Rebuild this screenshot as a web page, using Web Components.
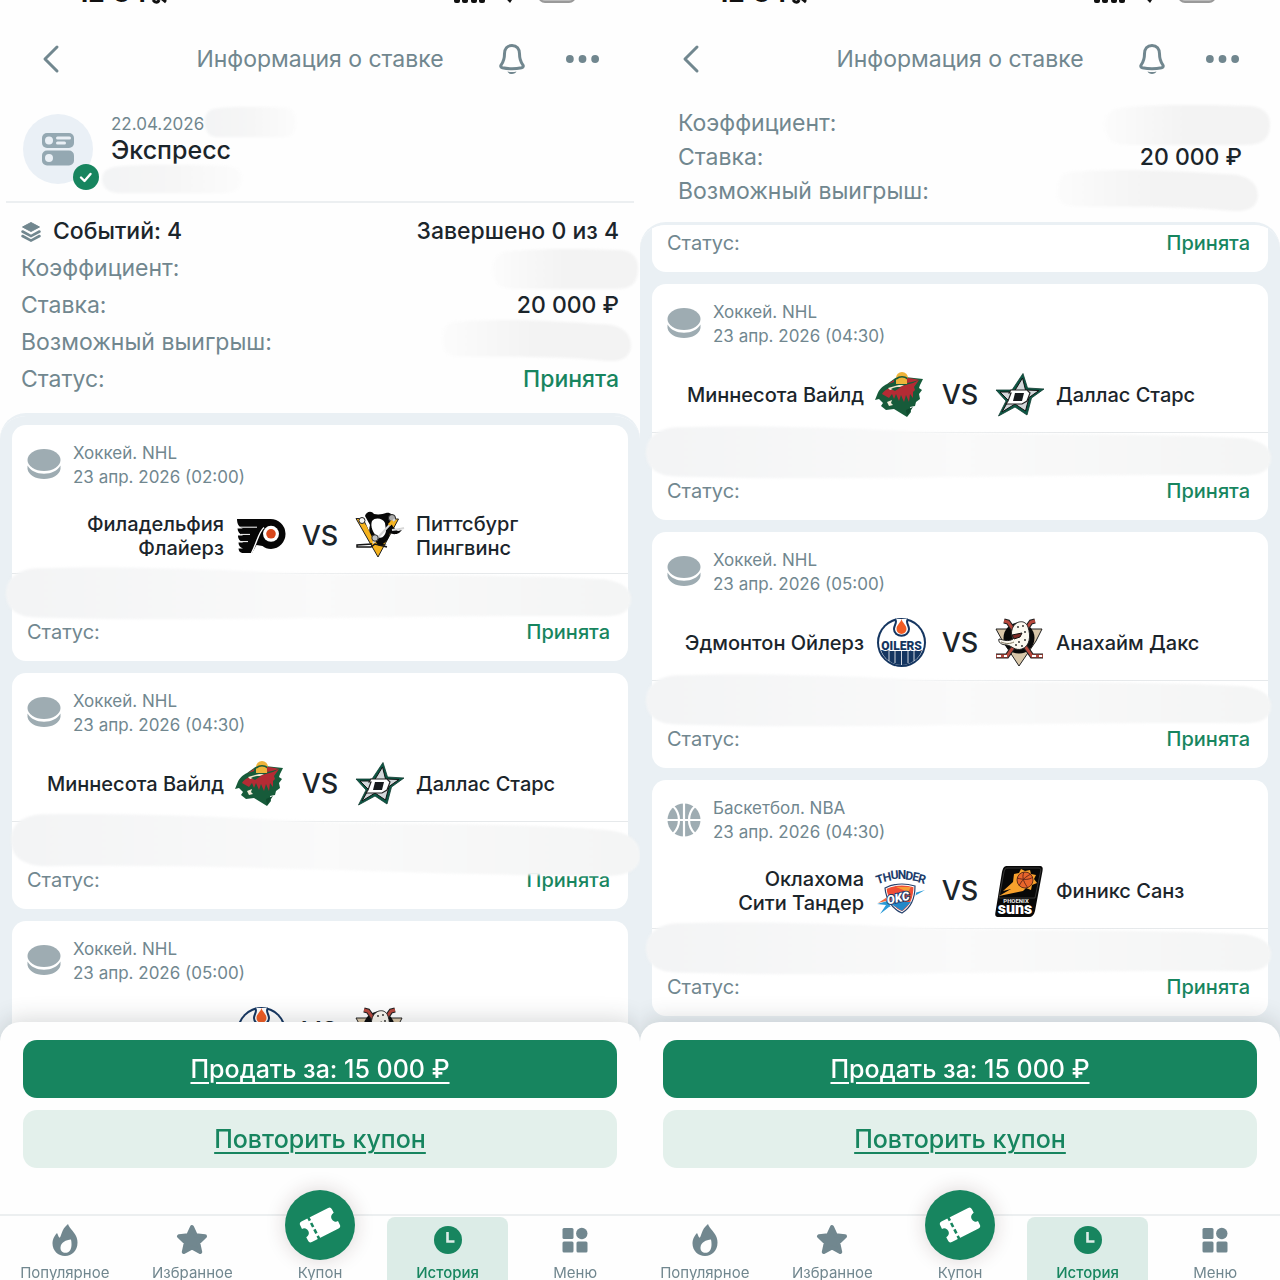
<!DOCTYPE html>
<html lang="ru">
<head>
<meta charset="utf-8">
<title>Информация о ставке</title>
<style>
  body {
    margin: 0;
    font-family: Inter, "Noto Sans", sans-serif;
    color: #1b252b;
    background: #fefefe;
    --green: #17855f;
    --green-soft: #e3f0eb;
    --gray: #71878f;
    --list: #eaf0f4;
  }
  main {
    display: grid;
    grid-template-columns: 1fr 1fr;
    height: 100vh;
    overflow: hidden;
  }
</style>
</head>
<body>
<main>
  <bet-screen view="full"></bet-screen>
  <bet-screen view="scrolled" scroll="198"></bet-screen>
</main>

<script>
const MATCHES = [
  {
    sport: 'hockey', league: 'Хоккей. NHL', date: '23 апр. 2026 (02:00)',
    home: 'Филадельфия Флайерз', homeLogo: 'flyers', away: 'Питтсбург Пингвинс', awayLogo: 'penguins',
  },
  {
    sport: 'hockey', league: 'Хоккей. NHL', date: '23 апр. 2026 (04:30)',
    home: 'Миннесота Вайлд', homeLogo: 'wild', away: 'Даллас Старс', awayLogo: 'stars',
  },
  {
    sport: 'hockey', league: 'Хоккей. NHL', date: '23 апр. 2026 (05:00)',
    home: 'Эдмонтон Ойлерз', homeLogo: 'oilers', away: 'Анахайм Дакс', awayLogo: 'ducks',
  },
  {
    sport: 'basketball', league: 'Баскетбол. NBA', date: '23 апр. 2026 (04:30)',
    home: 'Оклахома Сити Тандер', homeLogo: 'thunder', away: 'Финикс Санз', awayLogo: 'suns',
  },
];

const ICONS = {
  back: ['0 0 20 30', '<path d="M16 3 4 15l12 12" fill="none" stroke="currentColor" stroke-width="3" stroke-linecap="round" stroke-linejoin="round"/>'],
  bell: ['0 0 28 32', '<path d="M14 2.500c-4.800 0-7.500 3.500-7.500 8.300 0 5.500-1.200 8.200-3.300 11-1 1.500-.4 2.500 1.200 2.900 6.200 1.300 13 1.300 19.200 0 1.600-.4 2.200-1.400 1.200-2.900-2.100-2.800-3.300-5.500-3.300-11 0-4.800-2.700-8.300-7.500-8.300z" fill="none" stroke="currentColor" stroke-width="3" stroke-linejoin="round"/><path d="M9.500 28.500c3 .8 6 .8 9 0-1.200 3.300-7.800 3.300-9 0z" fill="currentColor"/>'],
  dots: ['0 0 34 8', '<g fill="currentColor"><circle cx="4" cy="4" r="4"/><circle cx="17" cy="4" r="4"/><circle cx="30" cy="4" r="4"/></g>'],
  express: ['0 0 34 34', '<rect x="1" y="1" width="32" height="15" rx="5" fill="#94a8b2"/><rect x="1" y="18.500" width="32" height="15" rx="5" fill="#94a8b2"/><g fill="#eaf0f6"><circle cx="8" cy="8.500" r="4"/><circle cx="8" cy="26" r="4"/><rect x="15" y="4.500" width="15" height="3" rx="1.500"/><rect x="15" y="9.500" width="10" height="3" rx="1.500"/></g>'],
  check: ['0 0 28 28', '<circle cx="14" cy="14" r="13" fill="#17855f"/><path d="m9 14.500 3.500 3.500 6-7" fill="none" stroke="#fff" stroke-width="2.400" stroke-linecap="round" stroke-linejoin="round"/>'],
  layers: ['0 0 20 20', '<path d="M10 0.500 18.500 5 10 9.500 1.500 5z" fill="currentColor" stroke="currentColor" stroke-linejoin="round"/><path d="m1.500 9.500 8.500 4.600 8.500-4.600M1.500 14l8.500 4.600 8.500-4.600" fill="none" stroke="currentColor" stroke-width="2.600" stroke-linecap="round"/>'],
  hockey: ['0 0 34 34', '<ellipse cx="17" cy="12" rx="16.500" ry="11" fill="#9eacb2"/><path d="M.5 17.500c3 5.200 9 8.200 16.500 8.200s13.500-3 16.500-8.200V21c-1 6-8 10-16.500 10S1.500 27 .5 21z" fill="#9eacb2"/>'],
  basketball: ['0 0 34 34', '<circle cx="17" cy="17" r="16.500" fill="#9eacb2"/><path d="M17 0v34M0 17h34M6 3c8 8 8 20 0 28M28 3c-8 8-8 20 0 28" fill="none" stroke="#fff" stroke-width="2.200"/>'],
  flame: ['0 0 26 32', '<path d="M16 0c1.500 5.500 9.500 9 9.500 18.500C25.500 26.500 20 32 13 32S.5 26.500 .5 19.500c0-4.500 2-7.500 4.500-10.500 1 1.500 1.200 3.500 2.500 4.700C9.500 13 9 5.500 16 0zM19 15.500c-5 .5-10 2.500-10.500 8-.2 3 2 5.300 4.800 5.300 5.500 0 7.200-6.300 5.700-13.300z" fill="currentColor" fill-rule="evenodd"/>'],
  star: ['0 0 32 32', '<path d="m16 3 3.800 8.300 9.200 1-6.800 6.400 2 9.300L16 23.400 7.800 28l2-9.300L3 12.300l9.200-1z" fill="currentColor" stroke="currentColor" stroke-width="4" stroke-linejoin="round"/>'],
  ticket: ['0 0 44 44', '<g transform="rotate(-27 22 22)"><path d="M7 10.500h30a2.800 2.800 0 0 1 2.800 2.800v4a4.700 4.700 0 0 0 0 9.400v4a2.800 2.800 0 0 1-2.800 2.800H7a2.800 2.800 0 0 1-2.800-2.800v-4a4.700 4.700 0 0 0 0-9.400v-4A2.800 2.800 0 0 1 7 10.500z" fill="#fff"/><path d="M15 9v26" stroke="#17855f" stroke-width="2.600" stroke-dasharray="4.500 2.700"/></g>'],
  clock: ['0 0 32 32', '<circle cx="16" cy="16" r="14" fill="currentColor"/><path d="M15.500 8v9.500h7" fill="none" stroke="#dcece7" stroke-width="2.600"/>'],
  grid: ['0 0 32 32', '<g fill="currentColor"><rect x="3.500" y="4" width="11" height="11" rx="1.500"/><circle cx="22.800" cy="9.500" r="5.700"/><rect x="3.500" y="17.500" width="11" height="11" rx="1.500"/><rect x="17.500" y="17.500" width="11" height="11" rx="1.500"/></g>'],
  signal: ['0 0 126 24', '<g fill="#111"><rect x="4" y="14" width="6" height="9" rx="2"/><rect x="12" y="10" width="6" height="13" rx="2"/><rect x="21" y="6" width="6" height="17" rx="2"/><rect x="29" y="2" width="6" height="21" rx="2"/><path d="M46 8c7-7 17-7 24 0L60 23z"/></g><rect x="89" y="-2" width="36" height="24" rx="6" fill="#bbb" stroke="#999" stroke-width="2"/>'],
  moon: ['0 0 16 24', '<path d="M2 5h10v12H2z" fill="#111"/><path d="M1 20c2 3 5 3 6 0M9 18l5 4" stroke="#111" stroke-width="3" fill="none"/>'],
};

const LOGOS = {
  flyers: `
    <path d="M1 8h33a15 15 0 0 1 1 30c-3.500 0-6.200-.9-8.500-3L20.500 34 16 42H8c-4 0-5-1.500-5.500-4.500h4.500c-3-1-4.500-3-4.500-6h5C3.500 30 2 28 2 24.500h5C3.500 23 1.800 21 1.500 17.500H7C3 16.500 1 13 1 8z" fill="#060606"/>
    <g stroke="#fff" fill="none"><path d="M4 16.200h17M5 23.400h9M5 30.600h7" stroke-width="1"/><path d="M28 16.500C22.500 21 21 32 15.500 42" stroke-width="1.400"/></g>
    <circle cx="35" cy="22.800" r="8" fill="#fff"/><circle cx="35" cy="22.800" r="4.800" fill="#d8471b"/>`,
  penguins: `
    <path d="M2 7.500h7l9 20L37 8h7.500L24 46z" fill="#f5b21d" stroke="#222" stroke-width="1" stroke-linejoin="round"/>
    <path d="M11 5c1-4 6-6 9-2 5 1 9 0 12-1 4-1 7 2 8 5l-5 2c3 5 5 9 9 11l4-1-3 3c-4 2-7 1-9 0-1 6-4 9-7 11l4 1-8 1-4-5c-5-4-7-9-5-16z" fill="#080808"/>
    <path d="M18 10c3-4 11-3 13 2l1 8c-1 5-4 8-8 6-5-3-8-11-6-16z" fill="#fff"/>
    <path d="m8 12 4 2 11 22 1 8L8 12z" fill="#f5b21d"/>
    <circle cx="8" cy="9.500" r="3" fill="#f5f5f5" stroke="#222"/><circle cx="38" cy="7" r="3.500" fill="#aaa" stroke="#222"/>
    <path d="M41 8 19 32M38 19l8-1 4-1" stroke="#d8d8d8" stroke-width="2"/><path d="m18 33-15 1v2h14l4-3 12 3" fill="none" stroke="#151515" stroke-width="1.500"/>
    <circle cx="21" cy="27" r="3.200" fill="#bfc2c5" stroke="#333"/><path d="m35 14 4-4" stroke="#f5b21d" stroke-width="3"/>`,
  wild: `
    <path d="M1 25c2-6 6-9 10-11l7-5c3-3 7-3 11-2l18 2-3 6-1 3 3 2-3 4 1 5-4 3-1 4-5 1 1 5-4 5-13-8-8 1-5-4 2-3-4-4-4 1z" fill="#175b3a"/>
    <path d="M20 8a6 6 0 0 1 12 0l-1 6H20z" fill="#eeb33a"/><path d="M20 9c4-3 8-3 12 0" stroke="#175b3a" stroke-width="1.600" fill="none"/>
    <path d="M6 24c3-6 12-8 20-8l11-3 6-3-5 7 1 3-2 2v6l-3-4-1 8-3-7-2 7-3-7-2 6-3-7-2 5-2-5-3 4z" fill="#b42b34"/>
    <path d="M31 8c5 0 8 1 12 2l-7 2-5 1zM18 10l-6 4 6-2z" fill="#b42b34"/><path d="m12 18 11-3h5l-6 3-8 2z" fill="#f2e7ce"/><path d="M15 19c4-2 6-2 10-2l-6 4z" fill="#175b3a"/>
    <path d="m11 32 5-2-1 3 2 2-4 1" fill="#f4edda"/><path d="m31 46-1-6 7-3z" fill="#0f4a2e"/>`,
  stars: `
    <path d="m29 3.500 4.500 14.500L50 19 37.500 28 33 45 21 37 4.500 46 12 31 2 20h16z" fill="#0b5945" stroke="#103a30" stroke-width=".8"/>
    <path d="m28.500 8 3 12L45 20.500 35 27.500 31.500 41 21 34 8 42l6.500-11.500L6 22h14z" fill="#d3d7da" stroke="#111"/>
    <path d="M17 20h16l3 3-3 8-5 3H12l2-3 3-8h-2z" fill="#fff" stroke="#222" stroke-width="1.200"/><path d="M21 23h9l-2 8h-9z" fill="#171a1d"/>`,
  oilers: `
    <circle cx="25.500" cy="24.500" r="24.500" fill="#143560"/><circle cx="25.500" cy="24.500" r="22.500" fill="#fff"/>
    <path d="M5 32h41A21.500 21.500 0 0 1 5 32z" fill="#143560"/><path d="M13 31v12M19 31v14M25.500 31v16M32 31v14M38 31v12" stroke="#fff" stroke-width=".8"/>
    <path d="M19 1c3 3-1 6-1 10 0 9 15 9 15 0 0-4-4-7-1-10" fill="#fff" stroke="#143560" stroke-width="2"/>
    <path d="M25.500 1c1 4 5 6 5 10a5 5 0 0 1-10 0c0-4 4-6 5-10z" fill="#f15b22"/>
    <text x="25.500" y="32" text-anchor="middle" font-family="Roboto" font-size="12" font-weight="900" fill="#143560" stroke="#fff" stroke-width="2" paint-order="stroke">OILERS</text>`,
  ducks: `
    <path d="M2 11h46l-6 12-17 25L8 22z" fill="#d8c6a8" stroke="#222"/>
    <circle cx="25" cy="20" r="15.500" fill="#090909"/>
    <g fill="none"><path d="m10 3 4 1 24 34h11M41 3l-4 1-24 34H2" stroke="#222" stroke-width="5"/><path d="m10 3 4 1 24 34h11M41 3l-4 1-24 34H2" stroke="#b8483d" stroke-width="3"/><path d="M38 38h10M3 38h10" stroke="#fff" stroke-width="2" stroke-dasharray="4 3"/></g>
    <path d="M19 9c3-6 12-8 15 0 3 9 2 19-6 22-7 2-10-3-15-4-6 0-9-3-8-6 5 1 9 3 14 0-2-4-2-8 0-12z" fill="#fbf8f0" stroke="#222"/>
    <path d="m18 17 10-2-2 4-6 2z" fill="#7d2a26" stroke="#111"/><g fill="#222"><circle cx="24" cy="9" r=".9"/><circle cx="29" cy="8" r=".9"/><circle cx="31" cy="14" r=".9"/><circle cx="25" cy="24" r=".9"/><circle cx="31" cy="22" r=".9"/><circle cx="22" cy="27" r=".9"/><circle cx="28" cy="28" r=".9"/></g>
    <path d="M7 24c5 2 9 2 13 0" stroke="#7f765f" fill="none"/>`,
  thunder: `
    <path d="m1 38 48-14-14 8-22 9-9 7 6-9zM32 26l17-1" fill="#2b9bd7"/><path d="m2 37 14-9 24-4-26 10z" fill="#ef6a3b"/>
    <path d="M9 22c10-5 20-5 30-2 0 11-3 21-13 27C16 43 10 33 9 22z" fill="#ef4e36" stroke="#fff" stroke-width="3"/><path d="M9 22c10-5 20-5 30-2 0 11-3 21-13 27C16 43 10 33 9 22z" fill="none" stroke="#27416c" stroke-width="1.200"/>
    <path d="M12 36h23l-9 9z" fill="#2388c8"/><path d="M20 21h15l-3 5z" fill="#f59b35"/>
    <text x="23" y="36" transform="rotate(-13 23 36)" text-anchor="middle" font-family="Roboto" font-size="12" font-weight="900" font-style="italic" fill="#fff" stroke="#203b6a" stroke-width="2" paint-order="stroke">OKC</text>
    <g fill="#203b6a" font-family="Roboto" font-size="12" font-weight="700" text-anchor="middle"><text x="5" y="17" transform="rotate(-18 5 17)">T</text><text x="12" y="15" transform="rotate(-12 12 15)">H</text><text x="19" y="13" transform="rotate(-5 19 13)">U</text><text x="26" y="13">N</text><text x="33" y="14" transform="rotate(6 33 14)">D</text><text x="39" y="15" transform="rotate(11 39 15)">E</text><text x="45" y="17" transform="rotate(15 45 17)">R</text></g>`,
  suns: `
    <path d="M13 0h32c4 0 4 2 3.500 5L41 45c-1 4-3 6-6 6H5c-4 0-4-2-3.500-5L8 6c1-4 2-6 5-6z" fill="#080808"/>
    <path d="M14 2h30c3 0 3 1 2.500 4L41 32H5L10 6c.5-3 1.500-4 4-4z" fill="none" stroke="#555" stroke-width=".6"/>
    <path d="m20 8 5-1 2-4 4 2 5-1 1 4 5 1-2 4 3 4-5 2-1 5-5-2-3 3L5 30l12-7-8 2 10-9z" fill="#f8a12c"/>
    <circle cx="31" cy="14" r="8" fill="#e9652b" stroke="#431d12" stroke-width=".8"/><path d="M23 12c7 2 12 2 16-1M30 6c-3 6 1 12 4 16M25 20c3-6 6-9 12-12" fill="none" stroke="#5b2417" stroke-width=".9"/>
    <text x="22" y="37" text-anchor="middle" font-family="Roboto" font-size="6" font-weight="900" fill="#ddd">PHOENIX</text>
    <text x="21" y="48" text-anchor="middle" font-family="Roboto" font-size="16" font-weight="900" fill="#fff">suns</text>`,
};

// shapes of the smears that hide private values
const SMEARS = {
  pill: ['0 0 140 40', 'M18 3C50 0 90 1 122 2c14 1 18 10 17 20-1 13-8 17-20 17H20C6 39 1 30 1 20 1 10 7 4 18 3z'],
  wave: ['0 0 190 42', 'M12 4C50 0 105 2 160 6c20 0 28 10 28 20 0 12-10 16-24 15-50-5-95-4-145-4C4 37 0 30 1 20 2 10 5 5 12 4z'],
  wide: ['0 0 630 58', 'M30 3C130 1 210 4 300 8c110 2 210 1 300 5 25 3 30 12 29 20-1 12-12 15-28 15-200-2-370 6-570 1C12 49 1 41 1 27 1 14 10 5 30 3z'],
  low: ['0 0 630 64', 'M30 3c100-1 180 2 270 7 110 3 210 1 298 8 25 3 32 13 31 26-1 12-14 17-32 17-180 0-370-12-560-9C12 52 1 42 1 27 1 14 10 5 30 3z'],
};

class UiIcon extends HTMLElement {
  connectedCallback() {
    const [box, shapes] = ICONS[this.getAttribute('name')];
    this.attachShadow({ mode: 'open' }).innerHTML = `
      <style>
        :host { display: block; flex: none; }
        svg { display: block; width: 100%; height: 100%; overflow: visible; }
      </style>
      <svg viewBox="${box}" aria-hidden="true">${shapes}</svg>`;
  }
}

class TeamLogo extends HTMLElement {
  connectedCallback() {
    this.attachShadow({ mode: 'open' }).innerHTML = `
      <style>
        :host { display: block; width: 50px; height: 50px; }
        svg { display: block; overflow: visible; }
      </style>
      <svg viewBox="0 0 50 50" width="50" height="50">${LOGOS[this.getAttribute('team')]}</svg>`;
  }
}

class SmearMark extends HTMLElement {
  connectedCallback() {
    const [box, shape] = SMEARS[this.getAttribute('shape')];
    this.attachShadow({ mode: 'open' }).innerHTML = `
      <style>
        :host { display: block; pointer-events: none; }
        svg { display: block; width: 100%; height: 100%; filter: blur(1px); }
      </style>
      <svg viewBox="${box}" preserveAspectRatio="none" aria-hidden="true">
        <linearGradient id="fade"><stop stop-color="var(--from, #f3f4f5)"/><stop offset=".5" stop-color="var(--mid, #fafafa)"/><stop offset="1" stop-color="var(--to, #f4f5f5)"/></linearGradient>
        <path d="${shape}" fill="url(#fade)"/>
      </svg>`;
  }
}

class AppHeader extends HTMLElement {
  connectedCallback() {
    this.attachShadow({ mode: 'open' }).innerHTML = `
      <style>
        :host { display: block; color: var(--gray); }
        .status {
          display: flex;
          align-items: flex-end;
          height: 4px;
          padding: 0 64px 0 77px;
          overflow: hidden;
          color: #111;
          font-size: 26px;
          font-weight: 700;
          line-height: 22px;
        }
        .status .moon { width: 16px; height: 24px; margin-left: 4px; }
        .status .signal { width: 126px; height: 24px; margin-left: auto; }
        .bar {
          display: grid;
          grid-template-columns: 1fr auto 1fr;
          align-items: center;
          height: 94px;
          padding: 16px 41px 0;
          box-sizing: border-box;
        }
        h1 { margin: 0; font-size: 23px; font-weight: 400; }
        button { border: 0; padding: 0; background: none; color: inherit; }
        .back { justify-self: start; }
        .back ui-icon { width: 20px; height: 30px; }
        .actions { display: flex; justify-content: flex-end; align-items: center; gap: 40px; }
        .bell { width: 28px; height: 32px; }
        .dots { width: 33px; height: 8px; }
      </style>
      <div class="status"><span>12:34</span><ui-icon class="moon" name="moon"></ui-icon><ui-icon class="signal" name="signal"></ui-icon></div>
      <div class="bar">
        <button class="back" aria-label="Назад"><ui-icon name="back"></ui-icon></button>
        <h1><slot></slot></h1>
        <div class="actions">
          <button aria-label="Уведомления"><ui-icon class="bell" name="bell"></ui-icon></button>
          <button aria-label="Ещё"><ui-icon class="dots" name="dots"></ui-icon></button>
        </div>
      </div>`;
  }
}

class BetTitle extends HTMLElement {
  connectedCallback() {
    this.attachShadow({ mode: 'open' }).innerHTML = `
      <style>
        :host {
          display: flex;
          gap: 18px;
          margin: 0 6px;
          padding: 16px 17px 17px;
          border-bottom: 2px solid #eceff1;
        }
        .avatar {
          position: relative;
          display: grid;
          place-items: center;
          width: 70px;
          height: 70px;
          border-radius: 50%;
          background: #eaf0f6;
        }
        .avatar .kind { width: 34px; height: 34px; }
        .avatar .mark { position: absolute; right: -7px; bottom: -7px; width: 28px; height: 28px; }
        .text { position: relative; flex: 1; }
        .date { font-size: 17px; line-height: 20px; color: var(--gray); }
        h2 { margin: 0; font-size: 25px; font-weight: 500; line-height: 32px; }
        smear-mark { position: absolute; --mid: #f6f6f6; --to: #fcfcfc; }
        .time { left: 93px; top: -8px; width: 93px; height: 32px; }
        .number { left: -10px; top: 50px; width: 142px; height: 30px; }
      </style>
      <div class="avatar"><ui-icon class="kind" name="express"></ui-icon><ui-icon class="mark" name="check"></ui-icon></div>
      <div class="text">
        <div class="date">22.04.2026</div>
        <h2>Экспресс</h2>
        <smear-mark class="time" shape="pill"></smear-mark>
        <smear-mark class="number" shape="pill"></smear-mark>
      </div>`;
  }
}

class BetSummary extends HTMLElement {
  connectedCallback() {
    const full = this.hasAttribute('full');
    this.attachShadow({ mode: 'open' }).innerHTML = `
      <style>
        :host { display: block; padding: 8px 38px 14px; font-size: 23px; line-height: 34px; }
        :host([full]) { padding: 10px 21px 15px; line-height: 37px; }
        dl { margin: 0; }
        .row { position: relative; display: flex; justify-content: space-between; }
        dt { color: var(--gray); }
        dd { margin: 0; font-weight: 500; }
        .events dt { display: flex; align-items: center; gap: 12px; color: inherit; font-weight: 500; }
        .events ui-icon { width: 20px; height: 20px; color: var(--gray); }
        .ok { color: var(--green); }
        smear-mark { position: absolute; --from: #fcfcfc; --mid: #f3f3f3; --to: #f3f3f3; }
        .odds { right: -20px; top: -2px; width: 148px; height: 42px; }
        .win { right: -14px; top: -6px; width: 192px; height: 44px; }
        :host(:not([full])) .odds { right: -29px; width: 168px; }
        :host(:not([full])) .win { right: -18px; width: 204px; }
      </style>
      <dl>
        ${full ? '<div class="row events"><dt><ui-icon name="layers"></ui-icon>Событий: 4</dt><dd>Завершено 0 из 4</dd></div>' : ''}
        <div class="row"><dt>Коэффициент:</dt><dd><smear-mark class="odds" shape="pill"></smear-mark></dd></div>
        <div class="row"><dt>Ставка:</dt><dd>20 000 ₽</dd></div>
        <div class="row"><dt>Возможный выигрыш:</dt><dd><smear-mark class="win" shape="wave"></smear-mark></dd></div>
        ${full ? '<div class="row"><dt>Статус:</dt><dd class="ok">Принята</dd></div>' : ''}
      </dl>`;
  }
}

class MatchCard extends HTMLElement {
  connectedCallback() {
    const match = this.match;
    const smear = this.getAttribute('smear');
    this.attachShadow({ mode: 'open' }).innerHTML = `
      <style>
        :host {
          position: relative;
          display: block;
          padding: 16px 18px 17px 15px;
          border-radius: 14px;
          background: #fff;
        }
        header { display: flex; gap: 12px; align-items: center; color: var(--gray); font-size: 17px; line-height: 24px; }
        header ui-icon { width: 34px; height: 34px; }
        .teams {
          display: grid;
          grid-template-columns: 1fr 50px 68px 50px 1fr;
          align-items: center;
          height: 50px;
          margin: 22px -3px 12px 0;
          font-size: 20px;
          font-weight: 500;
          line-height: 24px;
          text-wrap: balance;
        }
        .home { justify-self: end; text-align: right; max-width: 186px; margin-right: 12px; }
        .away { max-width: 160px; margin-left: 12px; }
        .vs { text-align: center; font-size: 27px; }
        .line { height: 1px; margin: 0 -18px 46px -15px; background: #e6e9eb; }
        footer { display: flex; justify-content: space-between; font-size: 20px; line-height: 24px; color: var(--gray); }
        footer b { color: var(--green); font-weight: 500; }
        smear-mark { position: absolute; left: -7px; right: -4px; top: 140px; height: 62px; }
        smear-mark[shape=low] { left: -2px; right: -13px; top: 138px; height: 68px; }
      </style>
      <header>
        <ui-icon name="${match.sport}"></ui-icon>
        <div><div>${match.league}</div><div>${match.date}</div></div>
      </header>
      <div class="teams">
        <div class="home">${match.home}</div>
        <team-logo team="${match.homeLogo}"></team-logo>
        <div class="vs">VS</div>
        <team-logo team="${match.awayLogo}"></team-logo>
        <div class="away">${match.away}</div>
      </div>
      <div class="line"></div>
      <footer><span>Статус:</span><b>Принята</b></footer>
      ${smear ? `<smear-mark shape="${smear}"></smear-mark>` : ''}`;
  }
}

class MatchList extends HTMLElement {
  connectedCallback() {
    this.attachShadow({ mode: 'open' }).innerHTML = `
      <style>
        :host {
          display: block;
          border-top: 3px solid var(--list);
          border-radius: 26px 26px 0 0;
          background: var(--list);
          overflow: hidden auto;
          scrollbar-width: none;
        }
        .cards { display: flex; flex-direction: column; gap: 12px; padding: 9px 12px 32px; }
      </style>
      <div class="cards"></div>`;
    const cards = this.shadowRoot.querySelector('.cards');
    const smears = Number(this.getAttribute('scroll')) ? ['', 'wide', 'wide', 'wide'] : ['wide', 'low', 'wide', 'wide'];
    MATCHES.forEach((match, i) => {
      const card = document.createElement('match-card');
      card.match = match;
      card.setAttribute('smear', smears[i]);
      cards.appendChild(card);
    });
  }
}

class CouponActions extends HTMLElement {
  connectedCallback() {
    this.attachShadow({ mode: 'open' }).innerHTML = `
      <style>
        :host {
          display: grid;
          gap: 12px;
          padding: 18px 23px 46px;
          border-radius: 20px 20px 0 0;
          background: #fefefe;
          box-shadow: 0 -2px 24px rgba(40, 50, 55, .2);
        }
        button {
          height: 58px;
          border: 0;
          border-radius: 14px;
          font: 500 25px Inter, "Noto Sans", sans-serif;
          text-decoration: underline;
          text-decoration-thickness: 2px;
          text-underline-offset: 4px;
          color: #fff;
          background: var(--green);
        }
        .repeat { color: var(--green); background: var(--green-soft); }
      </style>
      <button>Продать за: 15 000 ₽</button>
      <button class="repeat">Повторить купон</button>`;
  }
}

class TabBar extends HTMLElement {
  connectedCallback() {
    this.attachShadow({ mode: 'open' }).innerHTML = `
      <style>
        :host { display: block; border-top: 2px solid #eceff0; background: #fefefe; }
        nav { display: grid; grid-template-columns: repeat(5, 1fr); height: 64px; padding: 0 1px; }
        a {
          display: flex;
          flex-direction: column;
          align-items: center;
          margin: 1px 3px 0;
          padding-top: 7px;
          border-radius: 8px 8px 0 0;
          color: var(--gray);
          font-size: 15px;
          font-weight: 400;
          line-height: 18px;
          text-decoration: none;
        }
        a > ui-icon { width: 32px; height: 32px; margin-bottom: 8px; }
        .active { color: var(--green); background: #dcece7; font-weight: 500; }
        .round {
          display: grid;
          place-items: center;
          width: 70px;
          height: 70px;
          margin: -34px 0 4px;
          border-radius: 50%;
          background: var(--green);
          box-shadow: 0 0 20px rgba(60, 30, 30, .18);
        }
        .round ui-icon { width: 44px; height: 44px; }
      </style>
      <nav>
        <a href="#popular"><ui-icon name="flame"></ui-icon>Популярное</a>
        <a href="#favorites"><ui-icon name="star"></ui-icon>Избранное</a>
        <a href="#coupon"><span class="round"><ui-icon name="ticket"></ui-icon></span>Купон</a>
        <a href="#history" class="active"><ui-icon name="clock"></ui-icon>История</a>
        <a href="#menu"><ui-icon name="grid"></ui-icon>Меню</a>
      </nav>`;
  }
}

class BetScreen extends HTMLElement {
  connectedCallback() {
    const full = this.getAttribute('view') === 'full';
    const scroll = Number(this.getAttribute('scroll'));
    this.attachShadow({ mode: 'open' }).innerHTML = `
      <style>
        :host { display: flex; flex-direction: column; min-width: 0; min-height: 0; overflow: hidden; background: #fefefe; }
        match-list { flex: 1; min-height: 0; }
        coupon-actions { position: relative; margin-top: -20px; }
        tab-bar { position: relative; }
      </style>
      <app-header>Информация о ставке</app-header>
      ${full ? '<bet-title></bet-title>' : ''}
      <bet-summary ${full ? 'full' : ''}></bet-summary>
      <match-list scroll="${scroll}"></match-list>
      <coupon-actions></coupon-actions>
      <tab-bar></tab-bar>`;
  }
}

customElements.define('ui-icon', UiIcon);
customElements.define('team-logo', TeamLogo);
customElements.define('smear-mark', SmearMark);
customElements.define('app-header', AppHeader);
customElements.define('bet-title', BetTitle);
customElements.define('bet-summary', BetSummary);
customElements.define('match-card', MatchCard);
customElements.define('match-list', MatchList);
customElements.define('coupon-actions', CouponActions);
customElements.define('tab-bar', TabBar);
customElements.define('bet-screen', BetScreen);

document.querySelectorAll('bet-screen').forEach((screen) => {
  const list = screen.shadowRoot.querySelector('match-list');
  list.scrollTop = Number(list.getAttribute('scroll'));
});
</script>
</body>
</html>
